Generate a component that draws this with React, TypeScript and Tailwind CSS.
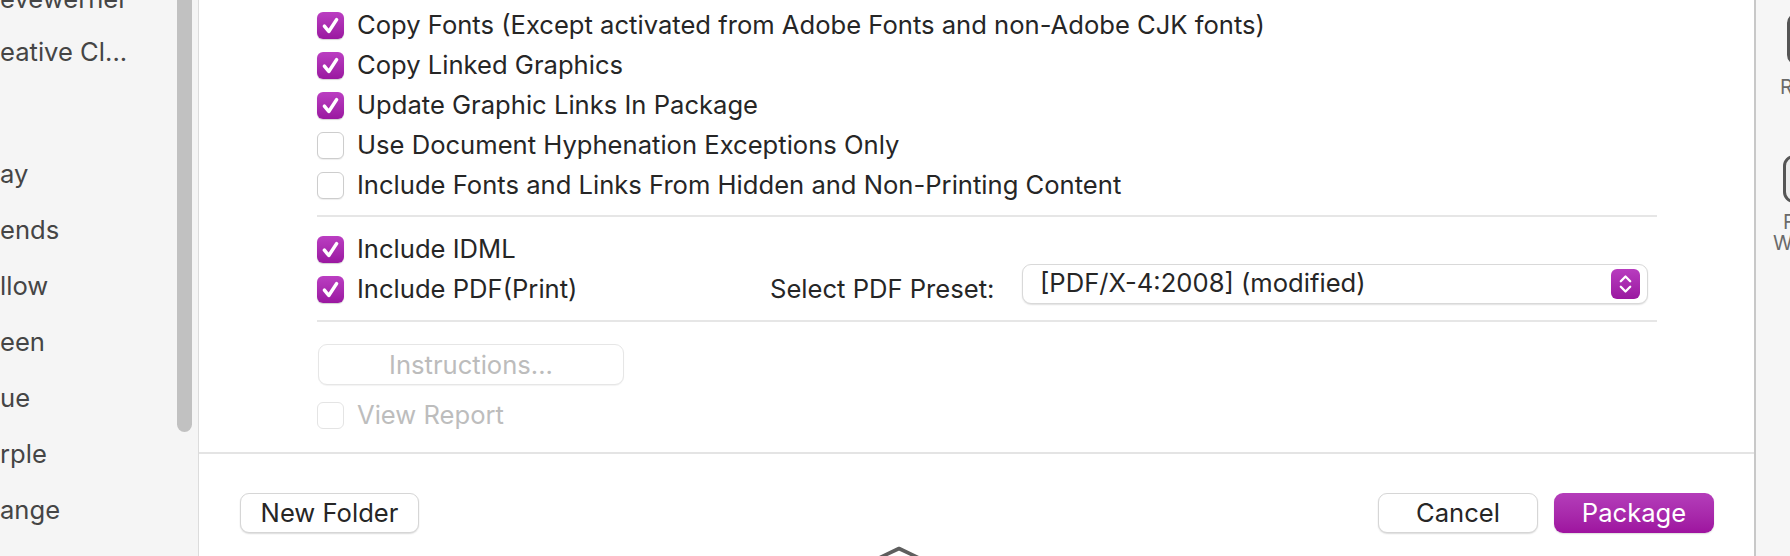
import React from "react";

function Check({ checked, disabled }: { checked?: boolean; disabled?: boolean }) {
  if (checked) {
    return (
      <div className="w-[27px] h-[27px] shrink-0 rounded-[6px] bg-linear-to-b from-[#bb3ec2] to-[#9a17a0] shadow-[0_1px_1px_rgba(0,0,0,0.18)] flex items-center justify-center">
        <svg width="27" height="27" viewBox="0 0 27 27">
          <path d="M7.4 14.2 L11.8 19.5 L19.6 7.6" fill="none" stroke="white" strokeWidth="3.5" strokeLinecap="round" strokeLinejoin="round" />
        </svg>
      </div>
    );
  }
  return (
    <div
      className={
        disabled
          ? "w-[27px] h-[27px] shrink-0 rounded-[6px] bg-white border border-[#e4e4e4]"
          : "w-[27px] h-[27px] shrink-0 rounded-[6px] bg-white border border-[#cdcdcd] shadow-[0_1px_1px_rgba(0,0,0,0.07)]"
      }
    />
  );
}

function Row({ label, checked, disabled }: { label: string; checked?: boolean; disabled?: boolean }) {
  return (
    <div className="h-[40px] flex items-center gap-[13px]">
      <Check checked={checked} disabled={disabled} />
      <span className={disabled ? "text-[#bdbdbd]" : "text-[#262626]"}>{label}</span>
    </div>
  );
}

function Sidebar() {
  const tags = ["ay", "ends", "llow", "een", "ue", "rple", "ange", "ed"];
  return (
    <div className="w-[199px] shrink-0 h-full bg-[#f5f5f5] border-r border-[#dcdcdc] flex overflow-hidden">
      <div className="flex-1 flex flex-col text-[#454545] mt-[-28px] whitespace-nowrap">
        <div className="h-[53px] shrink-0 flex items-center">evewerner</div>
        <div className="h-[53px] shrink-0 flex items-center">eative Cl...</div>
        <div className="h-[68px] shrink-0" />
        {tags.map((t) => (
          <div key={t} className="h-[56px] shrink-0 flex items-center">
            {t}
          </div>
        ))}
      </div>
      <div className="w-[15px] h-[452px] mt-[-20px] mr-[6px] shrink-0 rounded-full bg-[#c1c1c1]" />
    </div>
  );
}

function Stepper() {
  return (
    <div className="w-[29px] h-[30px] rounded-[6px] bg-linear-to-b from-[#b83cbf] to-[#9a17a0] flex items-center justify-center">
      <svg width="29" height="30" viewBox="0 0 29 30">
        <path d="M9.8 12.2 L14.5 7.5 L19.2 12.2" fill="none" stroke="white" strokeWidth="2.3" strokeLinecap="round" strokeLinejoin="round" />
        <path d="M9.8 17.8 L14.5 22.5 L19.2 17.8" fill="none" stroke="white" strokeWidth="2.3" strokeLinecap="round" strokeLinejoin="round" />
      </svg>
    </div>
  );
}

function Dialog() {
  return (
    <div className="w-[1557px] shrink-0 h-full bg-white border-r-2 border-[#c8c8c8] flex flex-col">
      <div className="h-[452px] shrink-0 pl-[118px] pr-[97px] pt-[5px] flex flex-col">
        <Row checked label="Copy Fonts (Except activated from Adobe Fonts and non-Adobe CJK fonts)" />
        <Row checked label="Copy Linked Graphics" />
        <Row checked label="Update Graphic Links In Package" />
        <Row label="Use Document Hyphenation Exceptions Only" />
        <Row label="Include Fonts and Links From Hidden and Non-Printing Content" />
        <div className="h-[2px] mt-[10px] bg-[#e6e6e6]" />
        <div className="mt-[12px]">
          <Row checked label="Include IDML" />
        </div>
        <div className="h-[40px] flex items-center">
          <div className="w-[453px] shrink-0">
            <Row checked label="Include PDF(Print)" />
          </div>
          <div className="w-[252px] shrink-0 text-[#262626] whitespace-nowrap">Select PDF Preset:</div>
          <div className="w-[626px] h-[40px] mb-[10px] shrink-0 rounded-[9px] bg-white border border-[#d9d9d9] shadow-[0_1px_1.5px_rgba(0,0,0,0.12)] flex items-center justify-between pl-[17px] pr-[7px]">
            <span className="text-[#262626] mb-[3px]">[PDF/X-4:2008] (modified)</span>
            <Stepper />
          </div>
        </div>
        <div className="h-[2px] mt-[11px] bg-[#e6e6e6]" />
        <div className="mt-[22px] ml-[1px] w-[306px] h-[41px] rounded-[9px] bg-white border border-[#e6e6e6] shadow-[0_1px_1px_rgba(0,0,0,0.05)] flex items-center justify-center text-[#bcbcbc]">
          Instructions...
        </div>
        <div className="mt-[10px]">
          <Row disabled label="View Report" />
        </div>
      </div>
      <div className="h-[2px] shrink-0 bg-[#e4e4e4]" />
      <div className="flex-1 flex items-start pt-[39px] pl-[41px] pr-[40px]">
        <div className="w-[179px] h-[40px] rounded-[9px] bg-white border border-[#d6d6d6] shadow-[0_1px_1.5px_rgba(0,0,0,0.14)] flex items-center justify-center text-[#262626]">
          New Folder
        </div>
        <div className="flex-1" />
        <div className="w-[160px] h-[40px] rounded-[9px] bg-white border border-[#d6d6d6] shadow-[0_1px_1.5px_rgba(0,0,0,0.14)] flex items-center justify-center text-[#262626]">
          Cancel
        </div>
        <div className="w-[160px] h-[40px] ml-[16px] rounded-[9px] bg-linear-to-b from-[#b43dba] to-[#9e139f] shadow-[0_1px_1.5px_rgba(0,0,0,0.14)] flex items-center justify-center text-white">
          Package
        </div>
      </div>
    </div>
  );
}

function RightPanel() {
  return (
    <div className="flex-1 h-full bg-[#f6f6f6] overflow-hidden">
      <div className="w-[120px] flex flex-col items-start text-[#6a6a6a] text-[20px] leading-[21px]">
        <div className="ml-[31px] mt-[13px] w-[60px] h-[52px] border-[3px] border-[#555555] rounded-[10px] bg-[#efefef]" />
        <div className="ml-[24px] mt-[12px]">R</div>
        <div className="ml-[27px] mt-[57px] w-[60px] h-[48px] border-[3px] border-[#555555] rounded-[11px] bg-[#ececec]" />
        <div className="ml-[27px] mt-[9px]">F</div>
        <div className="ml-[17px]">W</div>
      </div>
    </div>
  );
}

export default function App() {
  return (
    <div className="w-[1790px] h-[556px] overflow-hidden flex relative bg-white font-['Inter','Noto_Sans',sans-serif] text-[25.6px] leading-none">
      <Sidebar />
      <Dialog />
      <RightPanel />
      <svg className="absolute left-[876px] top-[545px]" width="46" height="14" viewBox="0 0 46 14">
        <polyline points="2,13.5 23,3.5 44,13.5" fill="none" stroke="#5e5e5e" strokeWidth="3.6" strokeLinejoin="round" />
      </svg>
    </div>
  );
}
